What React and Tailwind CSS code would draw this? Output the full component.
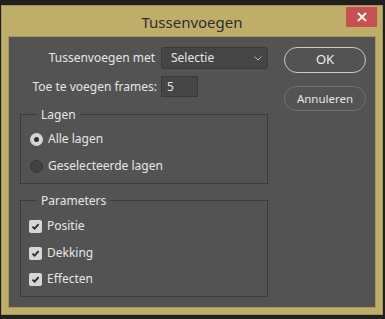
import React from 'react';

const font = { fontFamily: '"Noto Sans", "Open Sans", sans-serif' };

// Radio knop in Photoshop-stijl
const Radio = ({ checked, label }) => (
  <div className="flex items-center h-[20px] gap-[5px] pl-[9px]">
    {checked ? (
      <span className="w-[13px] h-[13px] rounded-full bg-[#d6d6d6] flex items-center justify-center">
        <span className="w-[5px] h-[5px] rounded-full bg-[#2e2e2e]" />
      </span>
    ) : (
      <span className="w-[13px] h-[13px] rounded-full bg-[#424242] border border-[#353535]" />
    )}
    <span className="text-[12px] text-[#e6e6e6]">{label}</span>
  </div>
);

const Check = ({ label }) => (
  <div className="flex items-center h-[20px] gap-[5px] pl-[8px]">
    <span className="w-[13px] h-[13px] rounded-[2px] bg-[#d6d6d6] flex items-center justify-center">
      <svg width="9" height="9" viewBox="0 0 9 9">
        <path d="M1.5 4.6 L3.6 6.7 L7.6 2.2" fill="none" stroke="#2b2b2b" strokeWidth="1.8" />
      </svg>
    </span>
    <span className="text-[12px] text-[#e6e6e6]">{label}</span>
  </div>
);

const Group = ({ title, className, children }) => (
  <div className={`border border-[#3c3c3c] flex flex-col ${className}`}>
    <span className="-mt-[8px] ml-[16px] px-[4px] w-fit leading-[16px] bg-[#535353] text-[12px] text-[#e6e6e6]">
      {title}
    </span>
    {children}
  </div>
);

export default function App() {
  return (
    <div className="w-[385px] h-[319px] bg-[#1f1f1f] pt-[5px] pl-[1px]" style={font}>
      <div className="relative w-[382px] h-[310px] bg-[#bfae6a] border border-[#a29458] flex flex-col">
        {/* Titelbalk */}
        <div className="h-[30px] flex items-center justify-center">
          <span className="text-[15px] text-[#2d2d2d] pt-[2px]">Tussenvoegen</span>
        </div>
        <div className="absolute top-[1px] right-[5px] w-[31px] h-[20px] bg-[#c75050] flex items-center justify-center">
          <svg width="10" height="10" viewBox="0 0 10 10">
            <path d="M1 1 L9 9 M9 1 L1 9" stroke="#ffffff" strokeWidth="1.8" />
          </svg>
        </div>

        {/* Inhoud */}
        <div className="mx-[6px] h-[272px] bg-[#535353] border border-[#a5975c] flex pt-[10px] pl-[11px]">
          <div className="w-[248px] flex flex-col">
            <div className="flex items-center h-[22px]">
              <span className="w-[137px] text-right pr-[2px] text-[12px] text-[#e6e6e6]">Tussenvoegen met</span>
              <div className="ml-[4px] w-[107px] h-[22px] rounded-[3px] bg-[#454545] border border-[#3a3a3a] flex items-center justify-between pl-[9px] pr-[5px]">
                <span className="text-[12px] text-[#e6e6e6]">Selectie</span>
                <svg width="8" height="5" viewBox="0 0 8 5">
                  <path d="M0.5 0.5 L4 4 L7.5 0.5" fill="none" stroke="#b5b5b5" strokeWidth="1" />
                </svg>
              </div>
            </div>
            <div className="flex items-center h-[21px] mt-[7px]">
              <span className="w-[137px] text-right text-[12px] text-[#e6e6e6]">Toe te voegen frames:</span>
              <div className="ml-[4px] w-[37px] h-[21px] bg-[#454545] border border-[#3a3a3a] flex items-center pl-[5px]">
                <span className="text-[12px] text-[#e6e6e6]">5</span>
              </div>
            </div>

            <Group title="Lagen" className="mt-[17px] h-[70px]">
              <div className="mt-[6px]">
                <Radio checked label="Alle lagen" />
              </div>
              <div className="mt-[7px]">
                <Radio label="Geselecteerde lagen" />
              </div>
            </Group>

            <Group title="Parameters" className="mt-[16px] h-[97px]">
              <div className="mt-[7px]">
                <Check label="Positie" />
              </div>
              <div className="mt-[7px]">
                <Check label="Dekking" />
              </div>
              <div className="mt-[6px]">
                <Check label="Effecten" />
              </div>
            </Group>
          </div>

          {/* Knoppen */}
          <div className="ml-[16px] flex flex-col">
            <button className="w-[82px] h-[26px] rounded-full border-[1.5px] border-[#c9c9c9] text-[13px] text-[#ececec]">
              OK
            </button>
            <button className="mt-[13px] w-[82px] h-[25px] rounded-full border border-[#707070] text-[11.5px] text-[#e6e6e6]">
              Annuleren
            </button>
          </div>
        </div>
      </div>
    </div>
  );
}
